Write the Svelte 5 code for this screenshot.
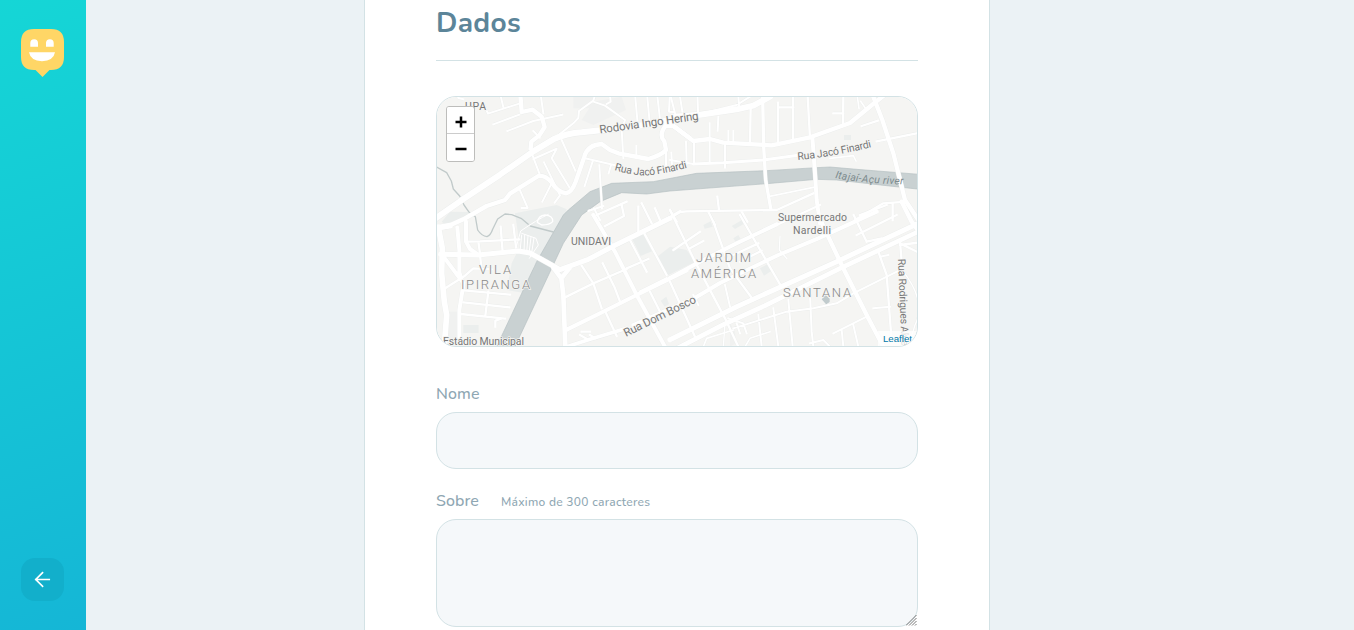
<script>
  // Map geometry uses a 3x grid, divided in four quarters.
  const quarters = [
    { x: 0, y: 0, roads: [
      [18, 'M10 390L90 334L210 254L310 184L370 148Q410 130 455 127L540 118L640 105L760 83'],
      [13, 'M0 420L50 410L100 388L170 348L225 330L240 311L325 258Q345 254 365 277Q382 306 408 310Q425 307 437 275L463 200Q473 164 515 162L540 180L565 190L655 207Q695 195 708 180L703 154Q685 135 707 107L730 108L780 145'],
      [13, 'M270 0L275 66L308 59L335 80L344 111L328 136L304 155L302 176'],
      [6, 'M80 0L85 24L100 28M162 44L174 71L270 40M210 10L220 52M190 103L268 74M232 123L310 93L397 74M340 70L330 0'],
      [6, 'M310 123L329 143M370 148L430 100L445 84L447 63L490 32L500 0M490 35L525 47L585 90L575 120L580 204'],
      [6, 'M303 184L328 250M310 207L380 176L365 205L418 292M395 150L436 242M342 217L390 316L374 338M366 278L337 335M270 301L293 354L275 354'],
      [6, 'M465 205L565 228M488 214L464 288M543 226L536 250M508 226L512 290L516 355M619 168L619 205M708 180L708 225M724 188L726 225'],
      [6, 'M538 0L542 35L530 42M614 0L622 90M650 0L658 87M680 0L690 88M720 0L717 65L733 66'],
      [6, 'M475 363L520 348M492 355L510 390']
    ]},
    { x: 720, y: 0, roads: [
      [18, 'M10 80L90 74L200 58L250 47L300 20'],
      [13, 'M0 100L70 153L120 147L160 158L305 166L420 142L540 99L613 39L650 10'],
      [13, 'M610 20L637 90L670 190L690 270L705 330L745 390'],
      [12, 'M427 140L435 250L440 330L450 400'],
      [10, 'M278 20L281 170L287 270L302 355'],
      [9, 'M70 222L160 218L280 210L390 195'],
      [7, 'M413 20L420 145M242 55L240 155M324 38L324 155M369 20L369 153M324 52L370 52M490 70L520 70M520 20L519 100M575 108L624 92M740 130L620 154'],
      [6, 'M0 210L70 222M48 155L50 222M72 155L72 220M119 100L119 215M145 80L143 122M175 123L175 155M190 123L190 155M165 160L165 233M27 0L37 65M82 0L84 66M205 20L208 58M100 70L200 45L240 20M0 10L15 70'],
      [5, 'M562 20L567 55M572 34L590 60M480 205L550 197L558 213M295 320L430 292'],
      [7, 'M30 366L50 364L320 360L430 310M450 345L320 405M555 390L640 340L710 335M115 365L135 405M215 365L232 395M142 320L147 360M668 340L668 390']
    ]},
    { x: 0, y: 375, roads: [
      [17, 'M10 40L60 32M25 36L37 100L35 175L43 260L50 300L43 390'],
      [15, 'M32 118L145 120L265 108L300 114L390 164L475 133L555 91L720 10'],
      [10, 'M690 25L750 -10'],
      [14, 'M370 158L394 190L400 240L406 395M418 160L398 185'],
      [12, 'M108 20L108 80L120 102L140 116M82 38L88 105L88 172L100 210L88 285L88 375M40 124L100 204'],
      [12, 'M490 0L555 110L620 240L705 395'],
      [12, 'M412 343L530 285L620 240L770 166'],
      [11, 'M410 395L480 373L590 340M610 330L780 255'],
      [7, 'M115 80L150 79L268 73M145 80L150 115M212 35L218 112M250 30L258 96M48 218L105 182L130 160L185 163M100 226L240 239M100 262L238 277M92 297L225 311M175 230L166 302M150 120L155 165M212 312L196 317L196 335'],
      [7, 'M455 152L490 205L515 280M405 247L490 205L590 162M518 145L555 220L570 260M525 288L560 363M630 230L710 190M660 230L695 300'],
      [7, 'M500 0L590 -40M525 33L582 3L575 -30M625 -25L625 50M635 -35L665 25M675 -20L690 15M640 50L710 180M600 75L650 170M590 160L655 132M730 105L810 50M780 100L820 78M720 -15L740 20M455 350L480 350M450 360L475 374M480 360L495 370'],
      [3, 'M255 110L272 48Q320 15 355 -2M275 55L318 70L325 90L298 130M275 60L270 110M284 60L282 110M294 63L290 112M303 66L297 115M312 68L304 120'],
      [4, 'M322 22Q325 2 345 0Q370 2 368 20Q360 30 335 30L322 22']
    ]},
    { x: 720, y: 375, roads: [
      [15, 'M0 374L200 275L500 140L745 25'],
      [14, 'M0 411L160 329L285 272L515 158L745 50'],
      [13, 'M456 25L515 150L590 300L640 395'],
      [12, 'M0 189L90 140L200 85L320 28M0 293L150 204L325 120L445 70L620 -10'],
      [13, 'M695 -40L725 20L755 60'],
      [7, 'M0 200L75 365M0 -15L75 140L165 310L205 395M130 20L180 160L250 255M210 0L330 208M190 120L265 85M210 140L275 107'],
      [7, 'M551 0L590 80M570 0L650 -30M560 60L680 0M590 80L635 70M625 110L650 180L665 380M690 80L695 140M690 85L745 112M690 90L750 82'],
      [6, 'M190 340L350 290L430 280L500 265L550 235L700 160M490 355L590 305M515 345L520 395M550 330L565 395M420 238L425 350L430 395M265 300L275 395M310 280L325 395M355 255L368 395M175 310L220 325L230 355M200 325L210 355M610 280L660 275M630 125L655 120M165 210L180 275M70 240L85 270M420 385L460 375L480 395'],
      [4, 'M330 65L328 105L350 130M700 170Q770 260 735 330L715 395M165 325L160 395'],
      [5, 'M100 395L110 370L190 345M225 395L240 370L300 350']
    ]}
  ];
</script>

<div class="shell">
  <aside>
    <svg class="logo" viewBox="0 0 43 48" aria-label="Happy">
      <path fill="#ffd666" d="M13 0h17q13 0 13 13v15q0 13-13 13h-1.500l-7 7-7-7H13Q0 41 0 28V13Q0 0 13 0Z" />
      <path fill="#fff" d="M9.300 17.800V14a3.850 3.850 0 0 1 7.700 0v3.800ZM25 17.800V14a3.850 3.850 0 0 1 7.700 0v3.800ZM8 23.300h26q-1.500 8.600-13 8.900Q9.500 31.900 8 23.300Z" />
    </svg>
    <button class="back" aria-label="Voltar">
      <svg viewBox="0 0 24 24"><path d="M19 12H5M12 19l-7-7 7-7" /></svg>
    </button>
  </aside>

  <main>
    <form>
      <h1>Dados</h1>
      <div class="map">
        <svg viewBox="437 97 480 249">
          <rect x="437" y="97" width="480" height="249" fill="#f5f5f3" />
          <g transform="translate(430 90) scale(.3333333)">
            <g fill="#ebeeed">
              <path d="M35 395L60 365L120 366L100 388L50 408ZM255 370L380 345L410 358L405 385L310 530L285 610L230 600L245 520L270 470ZM602 438L635 424L666 484L632 498ZM682 500L720 470L770 480L795 515L710 558ZM820 405L842 394L848 410L824 416ZM905 408L945 385L950 397L915 417ZM910 445L925 435L932 447L917 456ZM990 535L1015 521L1024 543L1002 557ZM692 632L709 620L717 642L704 650ZM1242 135h21v15h-21ZM100 705h46v24h-46Z" />
            </g>
            <g fill="#f0f1f0">
              <path d="M455 90L490 35L575 20L588 60L490 105ZM430 20h70l-20 35h-50ZM50 665h32v110H50ZM900 700L915 725L918 760L900 770Z" />
            </g>
            <path fill="#c9d1d2" stroke="#b5bfc1" stroke-width="2" d="M400 375L415 360L480 305L545 280L670 275L800 250L1010 242L1160 233L1200 231L1280 238L1480 254V299L1370 287L1220 270L1160 268L1010 281L720 303L650 312L575 308L510 335L455 375L400 460L365 535L250 780H195L320 515Z" />
            <g fill="none" stroke="#c1caca" stroke-width="4" stroke-linecap="round" stroke-linejoin="round">
              <path d="M20 231L50 248L64 273L70 297L89 318L102 345L116 365L136 380L143 420Q155 438 171 440Q182 436 188 418L203 387L225 372L245 374L275 386L301 408L370 426" />
            </g>
            <path fill="#c1cbcd" d="M1175 628l12-13 12 11v10l-8 5v8h-4v-8Z" />
            {#each quarters as q}
              <g transform={`translate(${q.x} ${q.y})`} fill="none" stroke="#ebedec" stroke-linejoin="round">
                {#each q.roads as [w, d]}<path stroke-width={w + 2} {d} />{/each}
              </g>
            {/each}
            {#each quarters as q}
              <g transform={`translate(${q.x} ${q.y})`} fill="none" stroke="#fff" stroke-linejoin="round" stroke-linecap="round">
                {#each q.roads as [w, d]}<path stroke-width={w} {d} />{/each}
              </g>
            {/each}
          </g>
          <defs>
            <path id="hering" d="M600 133.500L702 119.200" />
            <path id="jaco" d="M614 170Q638 177 651 175Q668 173 692 166.500" />
            <path id="finardi" d="M798 160Q825 158 875 146.500" />
            <path id="river" d="M835 178Q865 184 908 184.500" />
            <path id="bosco" d="M626 337L701 300" />
            <path id="rodrigues" d="M898 259L902.500 370" />
          </defs>
          <g class="labels">
            <text x="465" y="110" textLength="21">UPA</text>
            <text class="road big"><textPath href="#hering" textLength="100">Rodovia Ingo Hering</textPath></text>
            <text class="road"><textPath href="#jaco" textLength="75">Rua Jacó Finardi</textPath></text>
            <text class="road"><textPath href="#finardi" textLength="75">Rua Jacó Finardi</textPath></text>
            <text class="river"><textPath href="#river" textLength="69">Itajaí-Açu river</textPath></text>
            <text x="571" y="245" textLength="40">UNIDAVI</text>
            <text x="778" y="221" textLength="69">Supermercado</text>
            <text x="793" y="234" textLength="38">Nardelli</text>
            <text x="443" y="345" textLength="81">Estádio Municipal</text>
            <text class="road big"><textPath href="#bosco" textLength="79">Rua Dom Bosco</textPath></text>
            <text class="road"><textPath href="#rodrigues" textLength="92">Rua Rodrigues Alves</textPath></text>
            <g class="district">
              <text x="479" y="273.500" textLength="32">VILA</text>
              <text x="461" y="289" textLength="69">IPIRANGA</text>
              <text x="696" y="262" textLength="55">JARDIM</text>
              <text x="691" y="277.500" textLength="65">AMÉRICA</text>
              <text x="783" y="297" textLength="68">SANTANA</text>
            </g>
          </g>
        </svg>
        <div class="zoom">
          <button type="button" aria-label="Aproximar"><svg viewBox="0 0 12 12"><path d="M6 .5v11M.5 6h11" /></svg></button>
          <button type="button" aria-label="Afastar"><svg viewBox="0 0 12 12"><path d="M.5 6h11" /></svg></button>
        </div>
        <a class="leaflet" href="#map">Leaflet</a>
      </div>

      <label for="name">Nome</label>
      <input id="name" />
      <label for="about" class="second"><span class="about">Sobre</span><small>Máximo de 300 caracteres</small></label>
      <div class="field">
        <textarea id="about"></textarea>
        <svg class="grip" viewBox="0 0 11 11"><path d="M0 10.500L10.500 0M3 10.500L10.500 3M6 10.500L10.500 6M9 10.500L10.500 9" /></svg>
      </div>
    </form>
  </main>
</div>

<style>
  :global(body) { margin: 0; background: #ebf2f5; overflow: hidden; }
  * { box-sizing: border-box; }
  .shell { display: flex; height: 630px; overflow: hidden; font-family: Nunito, "Open Sans", sans-serif; }
  aside { width: 86px; flex: none; padding: 29px 21px; display: flex; flex-direction: column; justify-content: space-between; background: linear-gradient(160deg, #15d6d6 0%, #15b6d6 100%); }
  .logo { width: 43px; height: 48px; display: block; }
  .back { width: 43px; height: 43px; padding: 0; border: 0; border-radius: 14px; background: #12afcb; display: grid; place-items: center; }
  .back svg { width: 23px; height: 23px; fill: none; stroke: #fff; stroke-width: 1.800; stroke-linecap: square; stroke-linejoin: miter; }
  main { flex: 1; padding: 0 364px 0 278px; }
  form { width: 626px; height: 630px; padding: 0 71px; background: #fff; border: solid #d3e2e5; border-width: 0 1px; overflow: hidden; }
  h1 { height: 61px; margin: 0 0 35px; padding-top: 5px; border-bottom: 1px solid #d3e2e5; color: #5c8599; font-size: 28px; font-weight: 700; line-height: 36px; letter-spacing: .35px; }
  .map { position: relative; height: 251px; border: 1px solid #d3e2e5; border-radius: 20px; overflow: hidden; }
  .map > svg { display: block; width: 480px; height: 249px; }
  .labels { font: 400 10.500px Roboto, sans-serif; fill: #777; stroke: #f5f5f3; stroke-width: 1.500px; paint-order: stroke; }
  .labels .big { font-size: 11.500px; }
  .labels .river { fill: #7d8b8e; stroke: none; font-style: italic; }
  .district { font-size: 13px; font-weight: 300; fill: #888; }
  .zoom { position: absolute; top: 9px; left: 9px; width: 29px; height: 56px; border: 1px solid #bdbdbb; border-radius: 3px; overflow: hidden; }
  .zoom button { display: grid; place-items: center; width: 27px; height: 27px; padding: 1px 0 0 1px; border: 0; background: #fff; }
  .zoom button:first-child { border-bottom: 1px solid #ccc; padding-top: 3px; }
  .zoom button:last-child { padding-top: 2px; }
  .zoom svg { width: 12px; height: 12px; fill: none; stroke: #000; stroke-width: 2.500; }
  .leaflet { position: absolute; right: 0; bottom: 0; height: 15px; padding: 0 5px; background: rgb(255 255 255 / 75%); color: #0078a8; font: 9.700px/15px "Liberation Sans", sans-serif; text-decoration: none; }
  label { display: flex; align-items: center; height: 24px; margin-top: 35px; color: #8fa7b3; font-size: 16px; line-height: 24px; font-weight: 500; letter-spacing: .1px; }
  .about { width: 43px; white-space: nowrap; }
  small { margin: 2px 0 0 22px; font-size: 12px; font-weight: 500; letter-spacing: .27px; white-space: nowrap; }
  input, textarea { display: block; width: 100%; border: 1px solid #d3e2e5; border-radius: 20px; background: #f5f8fa; outline: 0; }
  input { height: 57px; margin: 6px 0 0; }
  .second { margin-top: 20px; }
  .field { position: relative; margin-top: 6px; }
  textarea { height: 108px; margin: 0; resize: none; }
  .grip { position: absolute; right: 1px; bottom: 1px; width: 11px; height: 11px; fill: none; stroke: #777; stroke-width: 1; }
</style>
